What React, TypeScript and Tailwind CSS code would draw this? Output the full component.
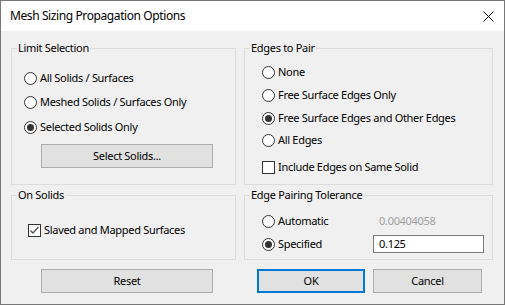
import React from 'react';

const font = { fontFamily: '"Noto Sans", "Open Sans", sans-serif' };

function Radio({ checked = false, label }: { checked?: boolean; label: string }) {
  return (
    <div className="flex h-[16px] items-center">
      <span className="flex h-[13px] w-[13px] shrink-0 items-center justify-center rounded-full border border-[#333333] bg-white">
        {checked && <span className="h-[7px] w-[7px] rounded-full bg-[#333333]" />}
      </span>
      <span className="ml-[3px] whitespace-nowrap leading-[16px]">{label}</span>
    </div>
  );
}

function Check({ checked = false, label }: { checked?: boolean; label: string }) {
  return (
    <div className="flex h-[16px] items-center">
      <span className="flex h-[13px] w-[13px] shrink-0 items-center justify-center border border-[#333333] bg-white">
        {checked && (
          <svg width="11" height="11" viewBox="0 0 11 11">
            <polyline points="1.5,5.5 4,8 9.5,2" fill="none" stroke="#555555" strokeWidth="1.3" />
          </svg>
        )}
      </span>
      <span className="ml-[3px] whitespace-nowrap leading-[16px]">{label}</span>
    </div>
  );
}

function Group({
  title,
  className,
  inner,
  children,
}: {
  title: string;
  className?: string;
  inner?: string;
  children: React.ReactNode;
}) {
  return (
    <fieldset className={`border border-[#dcdcdc] ${className ?? ''}`}>
      <legend className="ml-[5px] px-[1px] leading-[16px]">{title}</legend>
      <div className={inner}>{children}</div>
    </fieldset>
  );
}

function Btn({ label, className, primary = false }: { label: string; className?: string; primary?: boolean }) {
  return (
    <button
      className={`flex h-[24px] items-center justify-center bg-[#e1e1e1] leading-[16px] ${
        primary ? 'border-2 border-[#0078d7]' : 'border border-[#adadad]'
      } ${className ?? ''}`}
    >
      {label}
    </button>
  );
}

export default function App() {
  return (
    <div
      className="flex h-[305px] w-[505px] flex-col border border-[#777777] bg-[#f0f0f0] text-[11px] tracking-[-0.3px] text-black"
      style={font}
    >
      {/* Title bar */}
      <div className="flex h-[30px] shrink-0 items-center justify-between bg-white pl-[9px] pr-[10px]">
        <span className="text-[12px] leading-[16px] tracking-[-0.4px]">Mesh Sizing Propagation Options</span>
        <svg width="11" height="11" viewBox="0 0 11 11">
          <path d="M0.5 0.5 L10.5 10.5 M10.5 0.5 L0.5 10.5" stroke="#000" strokeWidth="1" />
        </svg>
      </div>

      {/* Body */}
      <div className="flex gap-[8px] pl-[10px] pt-[9px]">
        {/* Left column */}
        <div className="flex w-[225px] flex-col">
          <Group title="Limit Selection" className="h-[145px]" inner="pl-[12px]">
            <div className="mt-[14px]">
              <Radio label="All Solids / Surfaces" />
            </div>
            <div className="mt-[8px]">
              <Radio label="Meshed Solids / Surfaces Only" />
            </div>
            <div className="mt-[9px]">
              <Radio checked label="Selected Solids Only" />
            </div>
            <Btn label="Select Solids..." className="ml-[17px] mt-[9px] w-[172px]" />
          </Group>

          <Group title="On Solids" className="mt-[2px] h-[73px]" inner="pl-[16px]">
            <div className="mt-[19px]">
              <Check checked label="Slaved and Mapped Surfaces" />
            </div>
          </Group>

          <Btn label="Reset" className="ml-[30px] mt-[9px] w-[172px]" />
        </div>

        {/* Right column */}
        <div className="flex w-[249px] flex-col">
          <Group title="Edges to Pair" className="h-[145px]" inner="pl-[17px]">
            <div className="mt-[8px]">
              <Radio label="None" />
            </div>
            <div className="mt-[7px]">
              <Radio label="Free Surface Edges Only" />
            </div>
            <div className="mt-[7px]">
              <Radio checked label="Free Surface Edges and Other Edges" />
            </div>
            <div className="mt-[6px]">
              <Radio label="All Edges" />
            </div>
            <div className="mt-[11px]">
              <Check label="Include Edges on Same Solid" />
            </div>
          </Group>

          <Group title="Edge Pairing Tolerance" className="mt-[2px] h-[73px]" inner="pl-[17px]">
            <div className="mt-[9px] flex h-[18px] items-center">
              <div className="w-[111px]">
                <Radio label="Automatic" />
              </div>
              <span className="pl-[6px] leading-[16px] text-[#a0a0a0]">0.00404058</span>
            </div>
            <div className="mt-[5px] flex h-[18px] items-center">
              <div className="w-[111px]">
                <Radio checked label="Specified" />
              </div>
              <div className="flex h-[18px] w-[111px] items-center border border-[#7a7a7a] bg-white pl-[5px] leading-[16px]">
                0.125
              </div>
            </div>
          </Group>

          <div className="ml-[13px] mt-[9px] flex gap-[8px]">
            <Btn primary label="OK" className="w-[108px]" />
            <Btn label="Cancel" className="w-[109px]" />
          </div>
        </div>
      </div>
    </div>
  );
}
